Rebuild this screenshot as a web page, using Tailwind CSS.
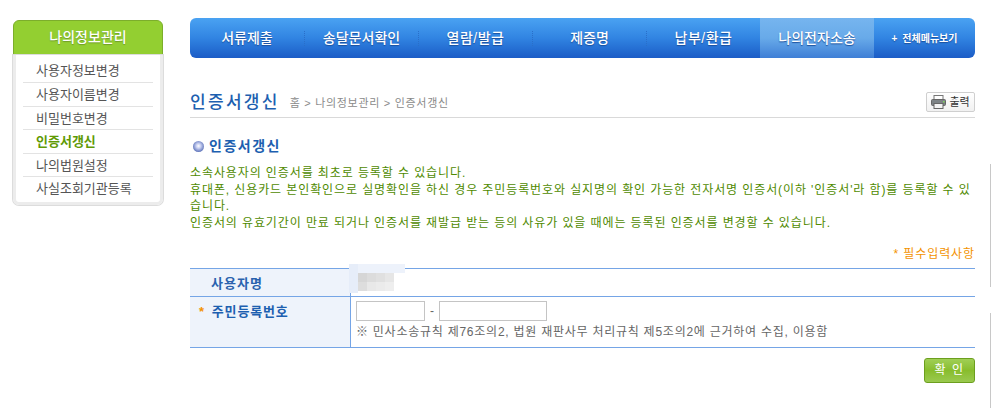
<!DOCTYPE html>
<html lang="ko">
<head>
<meta charset="utf-8">
<script src="https://cdn.jsdelivr.net/npm/@tailwindcss/browser@4"></script>
</head>
<body class="bg-white overflow-hidden font-['Liberation_Sans','Noto_Sans_CJK_KR',sans-serif]">
<div class="relative flex w-[991px] h-[408px] overflow-hidden">
  <aside class="ml-[13px] mt-[20px] w-[150px] shrink-0 self-start">
    <div class="h-[35px] rounded-t-[6px] bg-[#93cf31] border border-[#7cae2b] flex items-center justify-center text-white text-[14px] font-medium [text-shadow:0_1px_1px_#6f9a28]">나의정보관리</div>
    <div class="border-x-[3px] border-b-[3px] border-[#ececec] rounded-b-[6px] px-[7px] pt-[4px] pb-[1px] text-[13px] text-[#555] shadow-[0_0_0_1px_#dcdcdc]">
      <div class="h-[24px] border-b border-[#e3e3e3] pl-[13px] leading-[23px]">사용자정보변경</div>
      <div class="h-[24px] border-b border-[#e3e3e3] pl-[13px] leading-[23px]">사용자이름변경</div>
      <div class="h-[23px] border-b border-[#e3e3e3] pl-[13px] leading-[23px]">비밀번호변경</div>
      <div class="h-[24px] border-b border-[#e3e3e3] pl-[13px] leading-[23px] font-bold text-[#5f9a05]">인증서갱신</div>
      <div class="h-[23px] border-b border-[#e3e3e3] pl-[13px] leading-[23px]">나의법원설정</div>
      <div class="h-[24px] pl-[13px] leading-[24px]">사실조회기관등록</div>
    </div>
  </aside>
  <main class="ml-[27px] mt-[18px] w-[785px] shrink-0">
    <nav class="h-[40px] rounded-[6px] flex overflow-hidden bg-gradient-to-b from-[#4aa2f2] via-[#3184e2] to-[#1c5cc6] text-white text-[14px] font-medium [text-shadow:0_1px_1px_#1b4f9c]">
      <div class="w-[114px] flex items-center justify-center">서류제출</div>
      <div class="w-px h-[15px] self-center border-r border-dotted border-[#2a6fc9]"></div>
      <div class="w-[113px] flex items-center justify-center">송달문서확인</div>
      <div class="w-px h-[15px] self-center border-r border-dotted border-[#2a6fc9]"></div>
      <div class="w-[113px] flex items-center justify-center tracking-[0.5px]">열람/발급</div>
      <div class="w-px h-[15px] self-center border-r border-dotted border-[#2a6fc9]"></div>
      <div class="w-[113px] flex items-center justify-center">제증명</div>
      <div class="w-px h-[15px] self-center border-r border-dotted border-[#2a6fc9]"></div>
      <div class="w-[113px] flex items-center justify-center tracking-[0.5px]">납부/환급</div>
      <div class="w-[114px] flex items-center justify-center bg-gradient-to-b from-[#76b5ef] via-[#68aae9] to-[#3f7fd6]">나의전자소송</div>
      <div class="w-[101px] flex items-center justify-center text-[10px] font-bold gap-[5px]"><span>+</span><span>전체메뉴보기</span></div>
    </nav>
    <div class="mt-[28px] h-[32px] border-b border-[#d9d9d9] flex items-start">
      <h1 class="mt-[5px] text-[17px] leading-[24px] font-medium text-[#1d5fb0] tracking-[2.3px]">인증서갱신</h1>
      <p class="ml-[10px] mt-[9px] text-[11px] leading-[16px] text-[#8a8a8a] tracking-[0.7px]">홈 &gt; 나의정보관리 &gt; 인증서갱신</p>
      <button class="ml-auto mt-[6px] w-[49px] h-[20px] border border-[#cfcfcf] rounded-[2px] bg-gradient-to-b from-white to-[#f1f1f1] flex items-center justify-center gap-[3px] text-[11px] text-[#333]">
        <svg width="15" height="14" viewBox="0 0 15 14"><rect x="3" y="0.5" width="9" height="5" fill="#fff" stroke="#777"/><rect x="0.5" y="4.5" width="14" height="6" rx="1" fill="#7d8386" stroke="#666"/><rect x="3" y="8.5" width="9" height="5" fill="#f3f3f3" stroke="#666"/><rect x="12" y="6" width="1.5" height="1.5" fill="#7fd35a"/></svg>
        <span>출력</span>
      </button>
    </div>
    <h2 class="mt-[18px] h-[20px] flex items-center gap-[5px] pl-[3px] text-[14px] font-bold text-[#1d5fb0] tracking-[1.5px]">
      <span class="w-[11px] h-[11px] rounded-full bg-[radial-gradient(circle_at_50%_45%,#ffffff_0%,#c5cdf0_30%,#5a70b8_75%,#3c5596_100%)]"></span>
      <span>인증서갱신</span>
    </h2>
    <div class="mt-[9px] text-[12px] leading-[16.7px] text-[#4f8a00] tracking-[0.9px] break-all">
      <p>소속사용자의 인증서를 최초로 등록할 수 있습니다.</p>
      <p>휴대폰, 신용카드 본인확인으로 실명확인을 하신 경우 주민등록번호와 실지명의 확인 가능한 전자서명 인증서(이하 '인증서'라 함)를 등록할 수 있습니다.</p>
      <p>인증서의 유효기간이 만료 되거나 인증서를 재발급 받는 등의 사유가 있을 때에는 등록된 인증서를 변경할 수 있습니다.</p>
    </div>
    <p class="mt-[14px] text-right text-[12px] leading-[16px] text-[#f39200] tracking-[0.9px]">* 필수입력사항</p>
    <div class="mt-[6px] border-y border-[#75a5e6]">
      <div class="flex h-[28px] border-b border-[#75a5e6]">
        <div class="w-[161px] bg-[#eef3fb] border-r border-[#75a5e6] pl-[21px] text-[13px] leading-[29px] font-bold text-[#2a62ae] tracking-[1px]">사용자명</div>
        <div class="relative flex-1">
          <div class="absolute left-[-2px] top-[-5px] w-[56px] h-[9px] bg-[#edf2fb]"></div>
          <div class="absolute left-[-2px] top-[-5px] w-[9px] h-[29px] bg-[#e6edf9]"></div>
          <div class="absolute left-[7px] top-[4px] w-[36px] h-[18px] grid grid-cols-4 grid-rows-2">
            <div class="bg-[#d6d6d6]"></div><div class="bg-[#dcdcdc]"></div><div class="bg-[#e0e0e0]"></div><div class="bg-[#e6e6e6]"></div>
            <div class="bg-[#dddddd]"></div><div class="bg-[#e8e8e8]"></div><div class="bg-[#ebebeb]"></div><div class="bg-[#eeeeee]"></div>
          </div>
        </div>
      </div>
      <div class="flex h-[50px]">
        <div class="w-[161px] bg-[#eef3fb] border-r border-[#75a5e6] pl-[9px] pt-[5px] text-[13px] leading-[20px] font-bold text-[#1d5fb0] tracking-[0.8px]"><span class="text-[#f39200] mr-[7px]">*</span>주민등록번호</div>
        <div class="flex-1 pl-[5px] pt-[4px]">
          <div class="flex items-center h-[20px]">
            <div class="w-[69px] h-[20px] border border-[#c4c4c4] bg-white"></div>
            <span class="w-[14px] text-center text-[12px] text-[#666]">-</span>
            <div class="w-[108px] h-[20px] border border-[#c4c4c4] bg-white"></div>
          </div>
          <p class="mt-[3px] text-[12px] leading-[17px] text-[#666] tracking-[0.75px]">※ 민사소송규칙 제76조의2, 법원 재판사무 처리규칙 제5조의2에 근거하여 수집, 이용함</p>
        </div>
      </div>
    </div>
    <div class="mt-[10px] flex justify-end">
      <button class="w-[51px] h-[25px] rounded-[3px] border border-[#6c9f1e] bg-gradient-to-b from-[#a0cf55] via-[#88bd2c] to-[#9ac94e] text-white text-[12px] tracking-[1.5px]">확 인</button>
    </div>
  </main>
  <div class="absolute right-0 top-[164px] w-[1px] h-[123px] bg-[#c8c8c8]"></div>
  <div class="absolute right-0 top-[313px] w-[1px] h-[95px] bg-[#c8c8c8]"></div>
</div>
</body>
</html>
